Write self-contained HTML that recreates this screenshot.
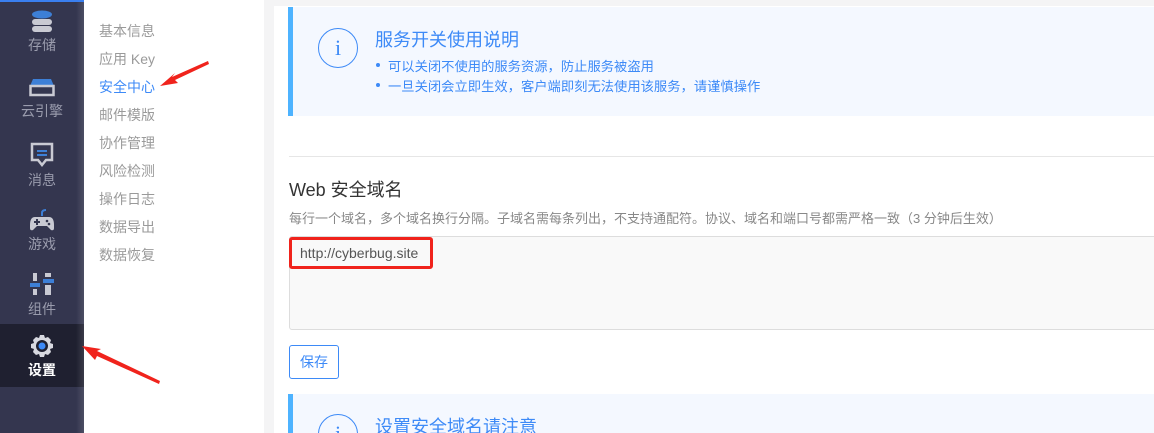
<!DOCTYPE html>
<html style="overflow:hidden;width:1154px;height:433px"><head><meta charset="utf-8"><style>
*{margin:0;padding:0;box-sizing:border-box}
body{width:1154px;height:433px;overflow:hidden;background:#fff;font-family:"Liberation Sans","Noto Sans CJK SC",sans-serif;position:relative}
.side{position:absolute;left:0;top:0;width:84px;height:433px;background:#34364f;border-top:2px solid #3a7ff0}
.side:after{content:"";position:absolute;right:0;top:0;width:8px;height:100%;background:linear-gradient(90deg,rgba(255,255,255,0),rgba(255,255,255,.12))}
.it{position:absolute;left:0;width:84px;text-align:center;color:#9a9cad;font-size:14px}
.it svg{display:block;margin:0 auto}
.act{background:#1f2030;color:#fff}
.sub{position:absolute;left:84px;top:0;width:180px;height:433px;background:#fff}
.sub div{position:absolute;left:15px;font-size:14px;color:#9a9a9a}
.gap{position:absolute;left:264px;top:0;width:10px;height:433px;background:#f4f4f5}
.topgap{position:absolute;left:264px;top:0;width:890px;height:6px;background:#f4f4f5}
.info{position:absolute;left:288px;width:866px;background:#f4f8ff;border-left:5px solid #4db3ff;overflow:hidden}
.circ{position:absolute;left:25px;width:40px;height:40px;border:1.5px solid #3d8af7;border-radius:50%;color:#3d8af7;text-align:center;font:22px/38px "Liberation Serif",serif}
.ttl{position:absolute;left:82px;color:#3d8af7;font-size:18px}
.li{position:absolute;left:95px;color:#3d8af7;font-size:13.3px;white-space:nowrap}
.li:before{content:"";position:absolute;left:-12px;top:7px;width:4px;height:4px;border-radius:50%;background:#3d8af7}
</style></head><body>
<div class="side">
 <div class="it" style="top:8px"><svg width="24" height="24" viewBox="0 0 24 24"><ellipse cx="12" cy="4.5" rx="10" ry="4" fill="#3d7fd6"/><rect x="2" y="9" width="20" height="6" rx="3" fill="#c9cad3"/><rect x="2" y="16" width="20" height="6" rx="3" fill="#c9cad3"/></svg><div style="margin-top:1px">存储</div></div>
 <div class="it" style="top:74px"><svg width="26" height="22" viewBox="0 0 26 22"><path d="M4 3h18l3 7H1z" fill="#3d7fd6"/><rect x="1.5" y="10" width="23" height="9" fill="none" stroke="#c9cad3" stroke-width="2.5"/></svg><div style="margin-top:3px">云引擎</div></div>
 <div class="it" style="top:140px"><svg width="24" height="26" viewBox="0 0 24 26"><path d="M2 2h20v16h-6l-4 5-4-5H2z" fill="none" stroke="#c9cad3" stroke-width="2.5"/><rect x="7" y="8" width="10" height="2" fill="#3d7fd6"/><rect x="7" y="12" width="10" height="2" fill="#3d7fd6"/></svg><div style="margin-top:2px">消息</div></div>
 <div class="it" style="top:207px"><svg width="26" height="24" viewBox="0 0 26 24"><path d="M13 7v-3q0-3 4-3" fill="none" stroke="#3d7fd6" stroke-width="2"/><path d="M6 8h14q5 0 5 8v3q0 3-3 2l-4-4H8l-4 4q-3 1-3-2v-3q0-8 5-8z" fill="#c9cad3"/><path d="M5 13h6M8 10v6" stroke="#34364f" stroke-width="2"/><circle cx="18" cy="12" r="1.3" fill="#34364f"/><circle cx="20" cy="15" r="1.3" fill="#34364f"/></svg><div style="margin-top:1px">游戏</div></div>
 <div class="it" style="top:270px"><svg width="24" height="24" viewBox="0 0 24 24"><rect x="3" y="1" width="4" height="8" fill="#c9cad3"/><rect x="15" y="1" width="6" height="4" fill="#c9cad3"/><rect x="0" y="11" width="10" height="4" fill="#3d7fd6"/><rect x="13" y="7" width="11" height="4" fill="#3d7fd6"/><rect x="3" y="17" width="4" height="6" fill="#c9cad3"/><rect x="15" y="13" width="6" height="10" fill="#c9cad3"/></svg><div style="margin-top:3px">组件</div></div>
 <div class="it act" style="top:322px;height:63px;padding-top:10px"><svg width="24" height="24" viewBox="0 0 24 24"><path d="M10 1h4l1 3 3-1 3 3-1 3 3 1v4l-3 1 1 3-3 3-3-1-1 3h-4l-1-3-3 1-3-3 1-3-3-1v-4l3-1-1-3 3-3 3 1z" fill="#d8d9e0"/><circle cx="12" cy="12" r="6" fill="#1f2030"/><circle cx="12" cy="12" r="3.5" fill="#3d8af7"/></svg><div style="margin-top:2px;font-weight:bold">设置</div></div>
</div>
<div class="sub">
 <div style="top:21px">基本信息</div><div style="top:49px">应用 Key</div><div style="top:77px;color:#3d8af7">安全中心</div><div style="top:105px">邮件模版</div><div style="top:133px">协作管理</div><div style="top:161px">风险检测</div><div style="top:189px">操作日志</div><div style="top:217px">数据导出</div><div style="top:245px">数据恢复</div>
</div>
<div class="gap"></div><div class="topgap"></div>
<div class="info" style="top:7px;height:109px">
 <div class="circ" style="top:21px">i</div>
 <div class="ttl" style="top:19px">服务开关使用说明</div>
 <div class="li" style="top:49px">可以关闭不使用的服务资源，防止服务被盗用</div>
 <div class="li" style="top:69px">一旦关闭会立即生效，客户端即刻无法使用该服务，请谨慎操作</div>
</div>
<div style="position:absolute;left:289px;top:156px;width:865px;height:1px;background:#e6e6e6"></div>
<div style="position:absolute;left:289px;top:176px;font-size:18px;color:#333">Web 安全域名</div>
<div style="position:absolute;left:289px;top:208px;font-size:13px;color:#888;white-space:nowrap">每行一个域名，多个域名换行分隔。子域名需每条列出，不支持通配符。协议、域名和端口号都需严格一致（3 分钟后生效）</div>
<div style="position:absolute;left:289px;top:236px;width:870px;height:94px;background:#f9f9f9;border:1px solid #ddd;border-radius:3px"></div>
<div style="position:absolute;left:289px;top:237px;width:144px;height:32px;border:3px solid #f0231c;border-radius:3px"></div>
<div style="position:absolute;left:300px;top:245px;font-size:14px;color:#555">http://cyberbug.site</div>
<div style="position:absolute;left:289px;top:345px;width:50px;height:34px;border:1px solid #3d8af7;border-radius:3px;color:#3d8af7;font-size:14px;text-align:center;line-height:32px">保存</div>
<div class="info" style="top:394px;height:39px">
 <div class="circ" style="top:20px">i</div>
 <div class="ttl" style="top:19px">设置安全域名请注意</div>
</div>
<svg style="position:absolute;left:0;top:0" width="1154" height="433"><polygon points="208,61 172,77 175,73 160,86 178,83 175,80 209,64" fill="#f0231c"/><polygon points="160,381 97,351 101,349 82,346 95,360 97,356 159,384" fill="#f0231c"/></svg>
</body></html>
